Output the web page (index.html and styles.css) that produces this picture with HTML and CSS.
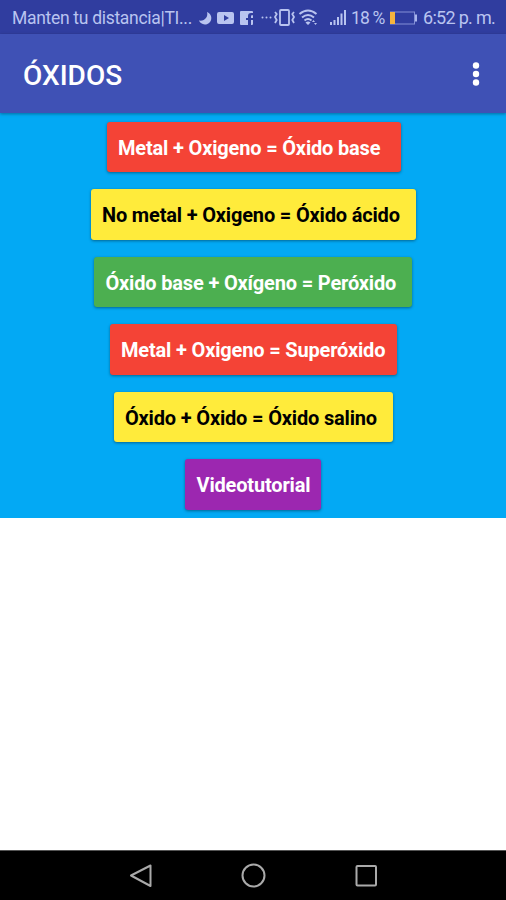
FILE: index.html
```html
<!DOCTYPE html>
<html lang="es">
<head>
<meta charset="utf-8">
<title>ÓXIDOS</title>
<link rel="stylesheet" href="styles.css">
</head>
<body>
<div class="status">
  <span class="notice">Manten tu distancia|TI...</span>
  <svg class="status-icons" width="150" height="34" viewBox="0 0 150 34" fill="#b9c4f0">
    <path d="M8 12a6.400 6.400 0 1 1-8 8.500C5.500 21.500 9.500 17 8 12Z"/>
    <path fill-rule="evenodd" d="M20 12h13q2 0 2 2v8q0 2-2 2H20q-2 0-2-2v-8q0-2 2-2Zm5 3v6l5-3Z"/>
    <path fill-rule="evenodd" d="M42 11h11q1 0 1 1v12q0 1-1 1h-1v-5h2v-2h-2v-2q0-1 2-1v-2h-2q-3 0-3 3v2h-2v2h2v5h-7q-1 0-1-1V12q0-1 1-1Z"/>
    <circle cx="63.5" cy="17.5" r="1"/><circle cx="67.5" cy="17.5" r="1"/><circle cx="71.5" cy="17.5" r="1"/>
    <g fill="none" stroke="#b9c4f0" stroke-width="1.8">
      <rect x="81" y="10" width="9" height="15" rx="1"/>
      <path d="m76 12 1.700 2-1.700 3 1.700 3-1.700 3M95 12l-1.700 2 1.700 3-1.700 3 1.700 3"/>
      <path d="M100.500 14q8.500-7 17 0M103 17.500q6-5 12 0M105.500 20.500q3.500-3 7 0" stroke-width="2"/>
    </g>
    <path d="m106.500 22.500 2.500 2.500 2.500-2.500q-2.500-2-5 0ZM113 22l1.500-2 1.500 2ZM115 23h3l-1.500 2Z"/>
    <path d="M131 22h2v3h-2ZM134.500 20h2v5h-2ZM138 17h2v8h-2ZM141.500 13.500h2V25h-2ZM145 10h2v15h-2Z"/>
  </svg>
  <span class="percent">18 %</span>
  <svg class="battery" width="30" height="34" viewBox="0 0 30 34">
    <rect x="1.500" y="12" width="24" height="12" fill="none" stroke="#8390d6"/>
    <path d="M1 12h5v12H1Z" fill="#f5b43e"/>
    <path d="M26 14.500h2v7h-2Z" fill="#a9b5ed"/>
  </svg>
  <span class="clock">6:52 p. m.</span>
</div>
<header class="appbar">
  <h1>ÓXIDOS</h1>
  <svg width="10" height="28" viewBox="0 0 10 28" fill="#fff"><circle cx="5" cy="5.500" r="3.200"/><circle cx="5" cy="14" r="3.200"/><circle cx="5" cy="22.500" r="3.200"/></svg>
</header>
<main class="menu">
  <button class="btn red base">Metal + Oxigeno = Óxido base</button>
  <button class="btn yellow acid">No metal + Oxigeno = Óxido ácido</button>
  <button class="btn green peroxide">Óxido base + Oxígeno = Peróxido</button>
  <button class="btn red superoxide">Metal + Oxigeno = Superóxido</button>
  <button class="btn yellow saline">Óxido + Óxido = Óxido salino</button>
  <button class="btn purple video">Videotutorial</button>
</main>
<nav class="navbar">
  <svg viewBox="0 0 26 26"><path d="M22.500 2.500v20.500L3 12.500Z"/></svg>
  <svg viewBox="0 0 26 26"><circle cx="13.500" cy="12.500" r="11"/></svg>
  <svg viewBox="0 0 26 26"><rect x="3.500" y="3" width="19.500" height="19.500" rx="1"/></svg>
</nav>
</body>
</html>
```
FILE: styles.css
```css
* { box-sizing: border-box; }
body {
  margin: 0;
  height: 900px;
  display: flex;
  flex-direction: column;
  background: #fff;
  font-family: Roboto, sans-serif;
  overflow: hidden;
}
.status {
  height: 34px;
  flex: none;
  display: flex;
  padding-left: 12px;
  background: #303d9f;
  color: #b9c4f0;
  font-size: 18px;
  line-height: 36px;
  white-space: nowrap;
}
.notice { width: 187px; flex: none; font-size: 17.5px; letter-spacing: -0.3px; }
.status-icons { flex: none; overflow: visible; }
.percent { width: 40px; flex: none; padding-left: 2px; font-size: 17.5px; letter-spacing: -0.8px; }
.battery { flex: none; }
.clock { margin-left: 4px; letter-spacing: -0.7px; }
.appbar {
  height: 79px;
  flex: none;
  display: flex;
  align-items: center;
  justify-content: space-between;
  padding: 0 25px 0 23px;
  background: #3f51b5;
  color: #fff;
  position: relative;
  box-shadow: 0 1px 3px rgba(0, 0, 0, 0.35);
}
h1 { margin: 4px 0 0; font-size: 28px; font-weight: 500; line-height: 32px; }
.menu {
  height: 404.5px;
  flex: none;
  display: flex;
  flex-direction: column;
  align-items: center;
  gap: 17px;
  padding-top: 8.5px;
  background: #03a9f4;
}
.btn {
  height: 50.5px;
  flex: none;
  border: 0;
  border-radius: 3px;
  padding: 2px 0 0 11.5px;
  font: 700 20px Roboto, sans-serif;
  letter-spacing: -0.17px;
  text-align: left;
  white-space: nowrap;
  color: #fff;
  box-shadow: 0 1px 3px rgba(0, 0, 0, 0.4);
}
.red { background: #f44336; }
.yellow { background: #ffeb3b; color: #000; }
.green { background: #4caf50; }
.purple { background: #9c27b0; }
.base { width: 294px; margin-left: 1px; }
.acid { width: 325px; }
.peroxide { width: 318px; }
.superoxide { width: 287px; }
.saline { width: 279px; }
.video { width: 136px; }
.navbar {
  height: 50px;
  flex: none;
  margin-top: auto;
  display: flex;
  justify-content: center;
  gap: 86.5px;
  padding-top: 12px;
  background: #000;
  border-top: 1px solid #555;
}
.navbar svg {
  width: 26px;
  height: 26px;
  fill: none;
  stroke: #aaa;
  stroke-width: 2;
  stroke-linejoin: round;
}
```
